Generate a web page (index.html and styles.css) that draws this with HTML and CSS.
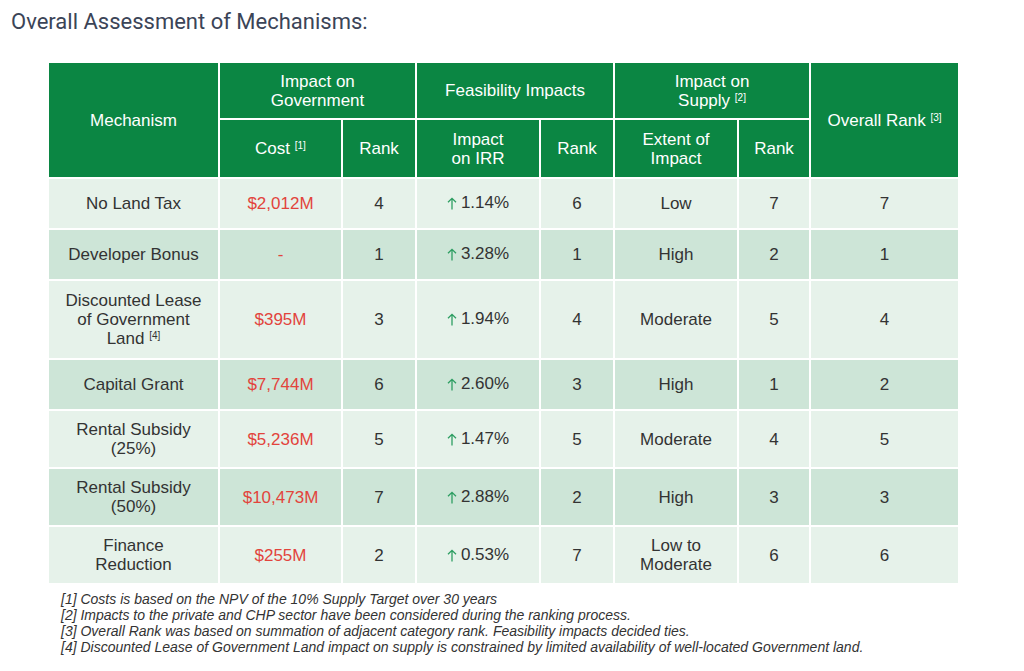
FILE: index.html
```html
<!DOCTYPE html>
<html>
<head>
<meta charset="utf-8">
<link rel="stylesheet" href="styles.css">
</head>
<body>
<h1 class="title">Overall Assessment of Mechanisms:</h1>
<div class="wrap">
<table class="grid">
  <colgroup>
    <col class="c-mech"><col class="c-cost"><col class="c-rank"><col class="c-irr"><col class="c-rank"><col class="c-ext"><col class="c-rank2"><col class="c-overall">
  </colgroup>
  <thead>
    <tr class="h1">
      <th rowspan="2">Mechanism</th>
      <th colspan="2">Impact on<br>Government</th>
      <th colspan="2">Feasibility Impacts</th>
      <th colspan="2">Impact on<br>Supply <sup>[2]</sup></th>
      <th rowspan="2">Overall Rank <sup>[3]</sup></th>
    </tr>
    <tr class="h2">
      <th>Cost <sup>[1]</sup></th>
      <th>Rank</th>
      <th>Impact<br>on IRR</th>
      <th>Rank</th>
      <th>Extent of<br>Impact</th>
      <th>Rank</th>
    </tr>
  </thead>
  <tbody>
    <tr class="light r49">
      <td>No Land Tax</td><td class="red">$2,012M</td><td>4</td>
      <td><span class="up"><svg width="10" height="13" viewBox="0 0 10 13"><path d="M5 12.5V1.3M1 5.2L5 1.3L9 5.2" fill="none" stroke="#2e9e62" stroke-width="1.3"/></svg>1.14%</span></td>
      <td>6</td><td>Low</td><td>7</td><td>7</td>
    </tr>
    <tr class="dark r49">
      <td>Developer Bonus</td><td class="red">-</td><td>1</td>
      <td><span class="up"><svg width="10" height="13" viewBox="0 0 10 13"><path d="M5 12.5V1.3M1 5.2L5 1.3L9 5.2" fill="none" stroke="#2e9e62" stroke-width="1.3"/></svg>3.28%</span></td>
      <td>1</td><td>High</td><td>2</td><td>1</td>
    </tr>
    <tr class="light r78">
      <td>Discounted Lease<br>of Government<br>Land <sup>[4]</sup></td><td class="red">$395M</td><td>3</td>
      <td><span class="up"><svg width="10" height="13" viewBox="0 0 10 13"><path d="M5 12.5V1.3M1 5.2L5 1.3L9 5.2" fill="none" stroke="#2e9e62" stroke-width="1.3"/></svg>1.94%</span></td>
      <td>4</td><td>Moderate</td><td>5</td><td>4</td>
    </tr>
    <tr class="dark r49">
      <td>Capital Grant</td><td class="red">$7,744M</td><td>6</td>
      <td><span class="up"><svg width="10" height="13" viewBox="0 0 10 13"><path d="M5 12.5V1.3M1 5.2L5 1.3L9 5.2" fill="none" stroke="#2e9e62" stroke-width="1.3"/></svg>2.60%</span></td>
      <td>3</td><td>High</td><td>1</td><td>2</td>
    </tr>
    <tr class="light r56">
      <td>Rental Subsidy<br>(25%)</td><td class="red">$5,236M</td><td>5</td>
      <td><span class="up"><svg width="10" height="13" viewBox="0 0 10 13"><path d="M5 12.5V1.3M1 5.2L5 1.3L9 5.2" fill="none" stroke="#2e9e62" stroke-width="1.3"/></svg>1.47%</span></td>
      <td>5</td><td>Moderate</td><td>4</td><td>5</td>
    </tr>
    <tr class="dark r56">
      <td>Rental Subsidy<br>(50%)</td><td class="red">$10,473M</td><td>7</td>
      <td><span class="up"><svg width="10" height="13" viewBox="0 0 10 13"><path d="M5 12.5V1.3M1 5.2L5 1.3L9 5.2" fill="none" stroke="#2e9e62" stroke-width="1.3"/></svg>2.88%</span></td>
      <td>2</td><td>High</td><td>3</td><td>3</td>
    </tr>
    <tr class="light r57">
      <td>Finance<br>Reduction</td><td class="red">$255M</td><td>2</td>
      <td><span class="up"><svg width="10" height="13" viewBox="0 0 10 13"><path d="M5 12.5V1.3M1 5.2L5 1.3L9 5.2" fill="none" stroke="#2e9e62" stroke-width="1.3"/></svg>0.53%</span></td>
      <td>7</td><td>Low to<br>Moderate</td><td>6</td><td>6</td>
    </tr>
  </tbody>
</table>
<div class="notes">
  <p>[1] Costs is based on the NPV of the 10% Supply Target over 30 years</p>
  <p>[2] Impacts to the private and CHP sector have been considered during the ranking process.</p>
  <p>[3] Overall Rank was based on summation of adjacent category rank. Feasibility impacts decided ties.</p>
  <p>[4] Discounted Lease of Government Land impact on supply is constrained by limited availability of well-located Government land.</p>
</div>
</div>
</body>
</html>
```

FILE: styles.css
```css
html, body {
  margin: 0;
  padding: 0;
  background: #ffffff;
}
body {
  font-family: "Liberation Sans", Arial, sans-serif;
  color: #333333;
}
.title {
  margin: 0;
  padding: 8px 0 0 11px;
  font-family: Roboto, "Liberation Sans", sans-serif;
  font-weight: 400;
  font-size: 22px;
  line-height: 28px;
  color: #3b4457;
}
.wrap {
  padding: 25px 0 0 47px;
}
.grid {
  border-collapse: separate;
  border-spacing: 2px;
  table-layout: fixed;
  width: 911px;
}
.c-mech { width: 169px; }
.c-cost { width: 121px; }
.c-rank { width: 72px; }
.c-irr { width: 122px; }
.c-ext { width: 122px; }
.c-rank2 { width: 70px; }
.c-overall { width: 147px; }
.grid th {
  background: #0b8643;
  color: #ffffff;
  font-weight: 400;
  font-size: 17px;
  line-height: 19px;
  text-align: center;
  vertical-align: middle;
  padding: 0;
}
.h1 { height: 55px; }
.h2 { height: 57px; }
.grid sup {
  font-size: 10px;
  vertical-align: 5px;
  line-height: 0;
}
.grid td {
  font-size: 17px;
  line-height: 19px;
  text-align: center;
  vertical-align: middle;
  padding: 0;
  color: #333333;
}
.light td { background: #e6f2ea; }
.dark td { background: #cde5d7; }
.r49 { height: 49px; }
.r78 { height: 77px; }
.r56 { height: 56px; }
.r57 { height: 56px; }
.red { color: #e2443c !important; }
.up {
  display: inline-flex;
  align-items: center;
  gap: 4px;
}
.up svg { display: block; margin-top: 2px; }
.notes {
  padding: 6px 0 0 14px;
  font-style: italic;
  font-size: 14px;
  line-height: 16px;
  color: #333333;
}
.notes p { margin: 0; }
```
